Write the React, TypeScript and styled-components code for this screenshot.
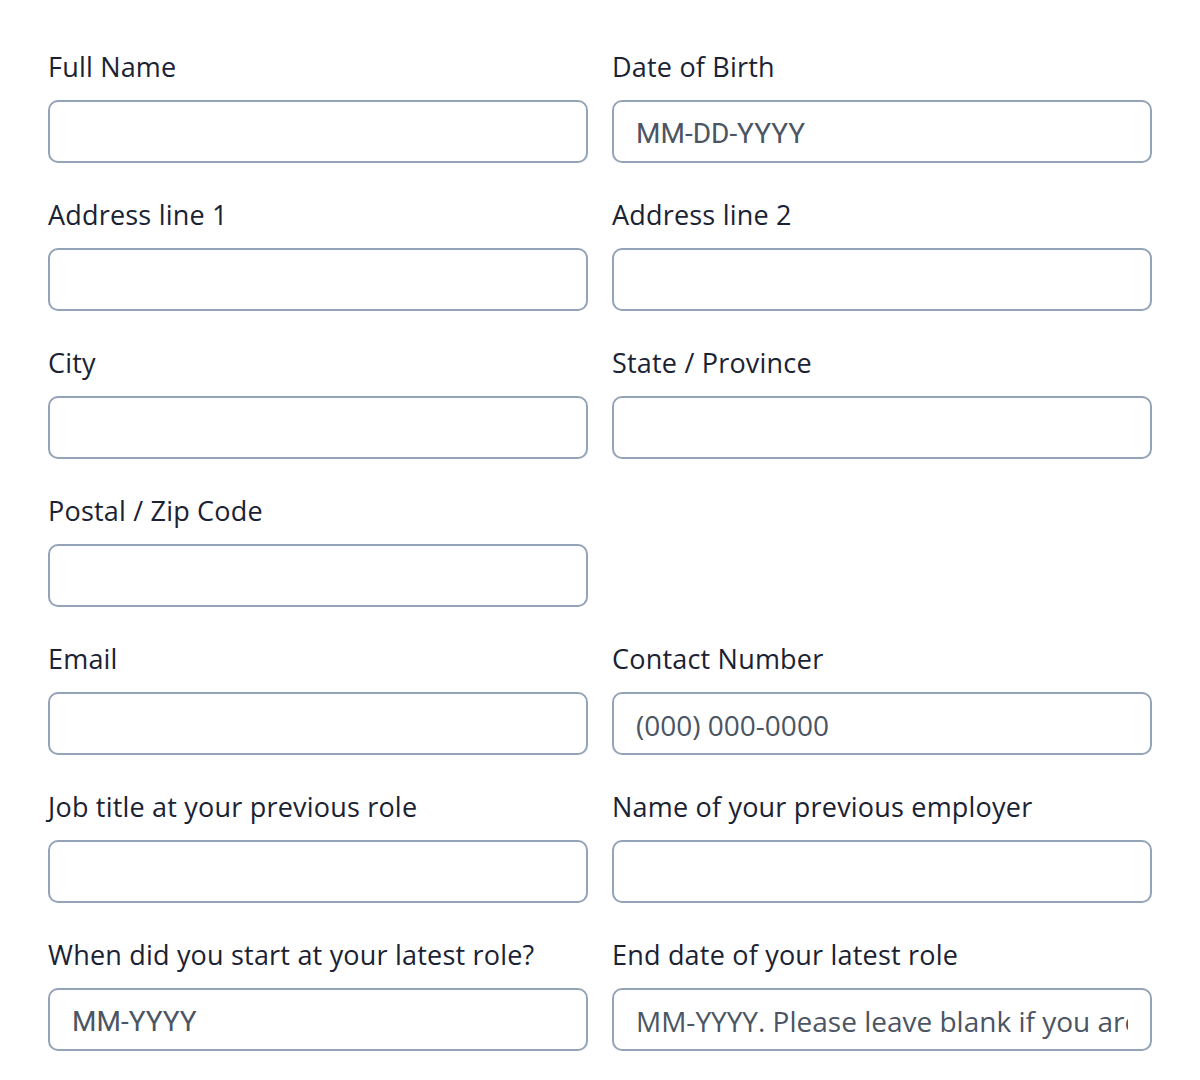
import React from 'react';
import styled, { createGlobalStyle } from 'styled-components';

const GlobalStyle = createGlobalStyle`
  html, body {
    margin: 0;
    padding: 0;
    background: #ffffff;
  }
  * {
    box-sizing: border-box;
  }
`;

const Page = styled.div`
  padding: 49px 48px 0 48px;
  width: 1200px;
  box-sizing: border-box;
`;

const Form = styled.form`
  display: grid;
  grid-template-columns: 540px 540px;
  column-gap: 24px;
  row-gap: 34px;
`;

const Field = styled.div<{ $empty?: boolean }>`
  display: flex;
  flex-direction: column;
  visibility: ${p => (p.$empty ? 'hidden' : 'visible')};
`;

const Label = styled.label`
  font-family: 'Open Sans', Lato, sans-serif;
  font-size: 27px;
  letter-spacing: 0.2px;
  line-height: 36px;
  color: #1a2233;
  margin-bottom: 15px;
  white-space: nowrap;
`;

const Input = styled.input<{ $font?: string }>`
  height: 63px;
  width: 100%;
  border: 2px solid #94a3b8;
  border-radius: 10px;
  padding: 3px 22px 0;
  font-family: ${p => p.$font ?? 'Roboto'}, sans-serif;
  font-size: 28px;
  color: #1e293b;
  background: #ffffff;
  outline: none;

  &::placeholder {
    color: #4b5563;
    opacity: 1;
  }
`;

type FieldDef = { label: string; placeholder?: string; font?: string } | null;

const fields: FieldDef[] = [
  { label: 'Full Name' },
  { label: 'Date of Birth', placeholder: 'MM-DD-YYYY' },
  { label: 'Address line 1' },
  { label: 'Address line 2' },
  { label: 'City' },
  { label: 'State / Province' },
  { label: 'Postal / Zip Code' },
  null,
  { label: 'Email' },
  { label: 'Contact Number', placeholder: '(000) 000-0000', font: "'Open Sans'" },
  { label: 'Job title at your previous role' },
  { label: 'Name of your previous employer' },
  { label: 'When did you start at your latest role?', placeholder: 'MM-YYYY' },
  {
    label: 'End date of your latest role',
    placeholder: 'MM-YYYY. Please leave blank if you are currently employed there',
    font: "'Open Sans'",
  },
];

const App: React.FC = () => {
  return <Page>
    <GlobalStyle />
    <Form onSubmit={e => e.preventDefault()}>
      {fields.map((f, i) =>
        f ? (
          <Field key={i}>
            <Label>{f.label}</Label>
            <Input type='text' placeholder={f.placeholder} $font={f.font} />
          </Field>
        ) : (
          <Field key={i} $empty />
        )
      )}
    </Form>
  </Page>;
};

export default App;
